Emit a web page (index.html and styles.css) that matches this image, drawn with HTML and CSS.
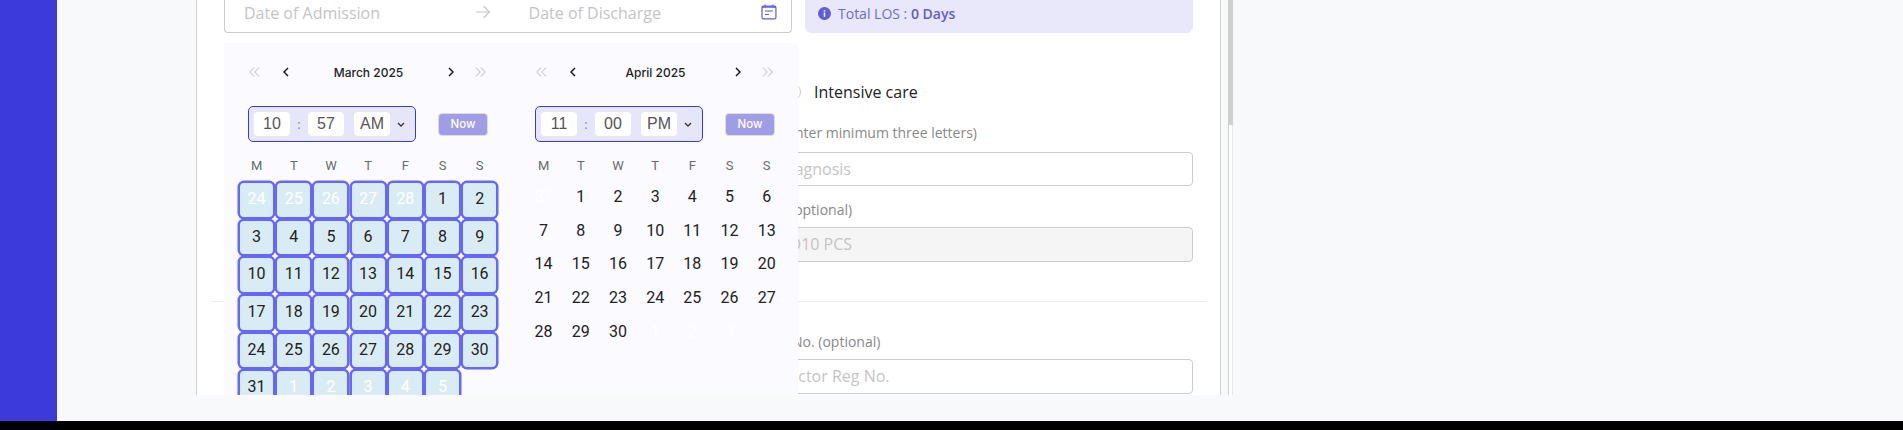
FILE: index.html
```html
<!DOCTYPE html>
<html lang="en">
<head>
  <meta charset="UTF-8">
  <title>Admission Details</title>
  <link rel="stylesheet" href="styles.css">
</head>
<body>
  <div class="page">
    <aside class="sidebar"></aside>
    <main class="content">
      <div class="card">
        <div class="top-row">
          <div class="date-range">
            <span class="date-text">Date of Admission</span>
            <svg class="date-arrow" width="16" height="14" viewBox="0 0 16 14" fill="none" stroke="#c8c8c8" stroke-width="1.2"><path d="M1 7h13.5M8.500 1l6 6-6 6"/></svg>
            <span class="date-text date-text-end">Date of Discharge</span>
            <svg class="date-icon" width="16" height="16" viewBox="0 0 16 16" fill="none" stroke="#5a57e8" stroke-width="1.2"><rect x="1" y="2" width="14" height="13" rx="1.500"/><path d="M4 0.500v2M12 0.500v2M1 3h14M4 7h8M4 10.500h4"/></svg>
          </div>
          <div class="los">
            <svg width="13" height="13" viewBox="0 0 13 13"><circle cx="6.500" cy="6.500" r="6.500" fill="#5f5cd6"/><rect x="5.700" y="5.500" width="1.600" height="4.500" fill="#e9e8fb"/><rect x="5.700" y="3" width="1.600" height="1.600" fill="#e9e8fb"/></svg>
            <span>Total LOS : <strong>0 Days</strong></span>
          </div>
        </div>

        <div class="radio-row">
          <span class="radio"></span>
          <span>Intensive care</span>
        </div>

        <div class="field field-diagnosis">
          <label class="field-label label-diagnosis">(enter minimum three letters)</label>
          <div class="input input-diagnosis">Diagnosis</div>
        </div>
        <div class="field field-procedure">
          <label class="field-label label-procedure">(optional)</label>
          <div class="input input-disabled">ICD10 PCS</div>
        </div>

        <hr class="divider">

        <div class="field field-doctor">
          <label class="field-label label-doctor">No. <span>(optional)</span></label>
          <div class="input input-doctor">Doctor Reg No.</div>
        </div>

        <div class="picker">
          <section class="month">
            <div class="month-head">
              <span class="nav nav-dim">
                <svg width="11" height="10" viewBox="0 0 11 10" fill="none" stroke="#b9b9c4" stroke-width="1"><path d="M5 0.500L0.800 5 5 9.500M10 0.500L5.800 5 10 9.500"/></svg>
              </span>
              <span class="nav nav-prev">
                <svg width="6" height="10" viewBox="0 0 6 10" fill="none" stroke="#111" stroke-width="1.400"><path d="M5 1L1 5l4 4"/></svg>
              </span>
              <span class="month-title">March 2025</span>
              <span class="nav nav-next">
                <svg width="6" height="10" viewBox="0 0 6 10" fill="none" stroke="#111" stroke-width="1.400"><path d="M1 1l4 4-4 4"/></svg>
              </span>
              <span class="nav nav-dim">
                <svg width="11" height="10" viewBox="0 0 11 10" fill="none" stroke="#b9b9c4" stroke-width="1"><path d="M1 0.500L5.200 5 1 9.500M6 0.500L10.200 5 6 9.500"/></svg>
              </span>
            </div>
            <div class="time-row">
              <div class="time-box">
                <span class="time-part">10</span>
                <span class="time-sep">:</span>
                <span class="time-part">57</span>
                <span class="time-part time-ampm">AM</span>
                <svg class="time-caret" width="8" height="5" viewBox="0 0 8 5" fill="none" stroke="#333" stroke-width="1.300"><path d="M1 1l3 3 3-3"/></svg>
              </div>
              <button class="now-btn">Now</button>
            </div>
            <div class="days">
              <span class="weekday">M</span><span class="weekday">T</span><span class="weekday">W</span><span class="weekday">T</span><span class="weekday">F</span><span class="weekday">S</span><span class="weekday">S</span>
              <span class="day in-range muted">24</span><span class="day in-range muted">25</span><span class="day in-range muted">26</span><span class="day in-range muted">27</span><span class="day in-range muted">28</span><span class="day in-range">1</span><span class="day in-range">2</span>
              <span class="day in-range">3</span><span class="day in-range">4</span><span class="day in-range">5</span><span class="day in-range">6</span><span class="day in-range">7</span><span class="day in-range">8</span><span class="day in-range">9</span>
              <span class="day in-range">10</span><span class="day in-range">11</span><span class="day in-range">12</span><span class="day in-range">13</span><span class="day in-range">14</span><span class="day in-range">15</span><span class="day in-range">16</span>
              <span class="day in-range">17</span><span class="day in-range">18</span><span class="day in-range">19</span><span class="day in-range">20</span><span class="day in-range">21</span><span class="day in-range">22</span><span class="day in-range">23</span>
              <span class="day in-range">24</span><span class="day in-range">25</span><span class="day in-range">26</span><span class="day in-range">27</span><span class="day in-range">28</span><span class="day in-range">29</span><span class="day in-range">30</span>
              <span class="day in-range">31</span><span class="day in-range muted">1</span><span class="day in-range muted">2</span><span class="day in-range muted">3</span><span class="day in-range muted">4</span><span class="day in-range muted">5</span>
            </div>
          </section>
          <section class="month">
            <div class="month-head">
              <span class="nav nav-dim">
                <svg width="11" height="10" viewBox="0 0 11 10" fill="none" stroke="#b9b9c4" stroke-width="1"><path d="M5 0.500L0.800 5 5 9.500M10 0.500L5.800 5 10 9.500"/></svg>
              </span>
              <span class="nav nav-prev">
                <svg width="6" height="10" viewBox="0 0 6 10" fill="none" stroke="#111" stroke-width="1.400"><path d="M5 1L1 5l4 4"/></svg>
              </span>
              <span class="month-title">April 2025</span>
              <span class="nav nav-next">
                <svg width="6" height="10" viewBox="0 0 6 10" fill="none" stroke="#111" stroke-width="1.400"><path d="M1 1l4 4-4 4"/></svg>
              </span>
              <span class="nav nav-dim">
                <svg width="11" height="10" viewBox="0 0 11 10" fill="none" stroke="#b9b9c4" stroke-width="1"><path d="M1 0.500L5.200 5 1 9.500M6 0.500L10.200 5 6 9.500"/></svg>
              </span>
            </div>
            <div class="time-row">
              <div class="time-box">
                <span class="time-part">11</span>
                <span class="time-sep">:</span>
                <span class="time-part">00</span>
                <span class="time-part time-ampm">PM</span>
                <svg class="time-caret" width="8" height="5" viewBox="0 0 8 5" fill="none" stroke="#333" stroke-width="1.300"><path d="M1 1l3 3 3-3"/></svg>
              </div>
              <button class="now-btn">Now</button>
            </div>
            <div class="days">
              <span class="weekday">M</span><span class="weekday">T</span><span class="weekday">W</span><span class="weekday">T</span><span class="weekday">F</span><span class="weekday">S</span><span class="weekday">S</span>
              <span class="day muted">31</span><span class="day">1</span><span class="day">2</span><span class="day">3</span><span class="day">4</span><span class="day">5</span><span class="day">6</span>
              <span class="day">7</span><span class="day">8</span><span class="day">9</span><span class="day">10</span><span class="day">11</span><span class="day">12</span><span class="day">13</span>
              <span class="day">14</span><span class="day">15</span><span class="day">16</span><span class="day">17</span><span class="day">18</span><span class="day">19</span><span class="day">20</span>
              <span class="day">21</span><span class="day">22</span><span class="day">23</span><span class="day">24</span><span class="day">25</span><span class="day">26</span><span class="day">27</span>
              <span class="day">28</span><span class="day">29</span><span class="day">30</span><span class="day muted">1</span><span class="day muted">2</span><span class="day muted">3</span>
            </div>
          </section>
        </div>
      </div>
      <div class="scrollbar"><div class="scroll-thumb"></div></div>
    </main>
  </div>
  <div class="black-bar"></div>
</body>
</html>
```

FILE: styles.css
```css
html, body {
  margin: 0;
  height: 100%;
  overflow: hidden;
}
body {
  font-family: "Open Sans", sans-serif;
  background: #f8f9fb;
}
.page {
  display: flex;
  height: 421px;
  overflow: hidden;
}
.sidebar {
  width: 57px;
  background: #3d3adb;
  flex-shrink: 0;
}
.content {
  display: flex;
  align-items: flex-start;
  padding-left: 139px;
}
.card {
  position: relative;
  width: 1025px;
  height: 395px;
  box-sizing: border-box;
  padding: 0 27px;
  background: #fff;
  border-left: 1px solid #d0d0d0;
  border-right: 1px solid #d0d0d0;
  overflow: hidden;
}
.scrollbar {
  box-sizing: border-box;
  width: 5px;
  height: 395px;
  margin-left: 7px;
  background: #fff;
  border-left: 1px solid #cfcfcf;
  border-right: 1px solid #e8e8e8;
}
.scroll-thumb {
  height: 125px;
  margin: 0 -1px;
  background: #cfcfcf;
}
.black-bar {
  height: 9px;
  background: #000;
}
.top-row {
  display: flex;
  gap: 13px;
}
.date-range {
  display: flex;
  align-items: center;
  box-sizing: border-box;
  width: 568px;
  height: 33px;
  padding: 0 14px 6px 19px;
  border: 1px solid #ccc;
  border-top: 0;
  border-radius: 0 0 4px 4px;
}
.date-text {
  width: 232px;
  font-size: 16px;
  color: #c4c4c4;
}
.date-text-end {
  margin-left: 38px;
  width: 234px;
}
.date-arrow {
  flex-shrink: 0;
  margin-bottom: 2px;
}
.date-icon {
  margin-left: auto;
  margin-bottom: 2px;
}
.los {
  display: flex;
  align-items: center;
  gap: 7px;
  width: 388px;
  height: 33px;
  box-sizing: border-box;
  padding: 0 13px 7px;
  background: #e9e8fb;
  border-radius: 0 0 6px 6px;
  font-size: 14px;
  color: #6b68dc;
}
.los strong {
  font-weight: 600;
  color: #5f5cd6;
}
.radio-row {
  display: flex;
  align-items: center;
  gap: 13px;
  margin: 48px 0 0 559px;
  height: 22px;
  font-size: 16px;
  color: #222;
}
.radio {
  box-sizing: border-box;
  width: 18px;
  height: 18px;
  border: 1px solid #ccc;
  border-radius: 50%;
}
.field {
  margin-left: 540px;
  width: 429px;
}
.field-diagnosis {
  margin-top: 21px;
}
.field-procedure {
  margin-top: 15px;
}
.field-doctor {
  margin-top: 31px;
}
.field-label {
  display: block;
  height: 18px;
  line-height: 18px;
  margin-bottom: 8px;
  font-size: 14px;
  color: #888;
}
.label-diagnosis {
  padding-left: 19px;
  margin-bottom: 10px;
}
.label-procedure { padding-left: 26px; }
.label-doctor { padding-left: 28px; }
.input {
  box-sizing: border-box;
  height: 35px;
  line-height: 33px;
  padding-left: 12px;
  border: 1px solid #ccc;
  border-radius: 4px;
  font-size: 16px;
  color: #c4c4c4;
  background: #fff;
}
.input-diagnosis {
  height: 34px;
  line-height: 32px;
  padding-left: 14px;
}
.input-disabled {
  background: #f5f5f5;
  padding-left: 10px;
}
.divider {
  margin: 39px -14px 0 -13px;
  border: 0;
  border-top: 1px solid #ededed;
}
.picker {
  position: absolute;
  left: 27px;
  top: 43px;
  display: flex;
  width: 574px;
  height: 360px;
  background: #fafaff;
}
.month {
  width: 287px;
  box-sizing: border-box;
  padding: 0 0 0 14px;
}
.month-head {
  display: flex;
  align-items: center;
  height: 20px;
  margin: 19px 0 0 11px;
  width: 237px;
}
.nav {
  display: flex;
}
.nav-prev {
  margin-left: 23px;
}
.nav-next {
  margin-right: 21px;
}
.month-title {
  flex: 1;
  text-align: center;
  font-family: Inter, sans-serif;
  font-size: 12px;
  font-weight: 500;
  color: #222;
}
.time-row {
  display: flex;
  align-items: center;
  margin: 24px 0 0 10px;
}
.time-box {
  display: flex;
  align-items: center;
  box-sizing: border-box;
  width: 168px;
  height: 36px;
  padding: 0 5px;
  background: #e6e6fa;
  border: 1px solid #3d3adb;
  border-radius: 5px;
}
.time-part {
  width: 36px;
  height: 24px;
  line-height: 24px;
  text-align: center;
  background: #fff;
  border-radius: 4px;
  font-family: "Liberation Sans", sans-serif;
  font-size: 16px;
  color: #555;
}
.time-sep {
  width: 18px;
  text-align: center;
  font-size: 13px;
  color: #888;
}
.time-ampm {
  margin-left: 10px;
}
.time-caret {
  margin-left: 7px;
}
.now-btn {
  width: 50px;
  height: 23px;
  margin-left: 22px;
  padding: 0;
  background: #a09de6;
  border: 1px solid #ddd;
  border-radius: 4px;
  font-family: Inter, sans-serif;
  font-size: 11.500px;
  font-weight: 500;
  color: #fff;
}
.days {
  display: grid;
  grid-template-columns: repeat(7, 37.200px);
  margin-top: 14px;
  font-family: Roboto, sans-serif;
}
.weekday {
  height: 25px;
  line-height: 20px;
  text-align: center;
  font-size: 13px;
  color: #6a6a6a;
}
.day {
  height: 33.700px;
  line-height: 31.700px;
  text-align: center;
  font-size: 16px;
  color: #222;
}
.day.in-range {
  width: 33px;
  background: #daecf3;
  border: 2px solid #6766ff;
  border-radius: 6px;
  box-shadow: 0 0 0 0.5px #6766ff;
}
.day.muted {
  color: #fff;
}
```
